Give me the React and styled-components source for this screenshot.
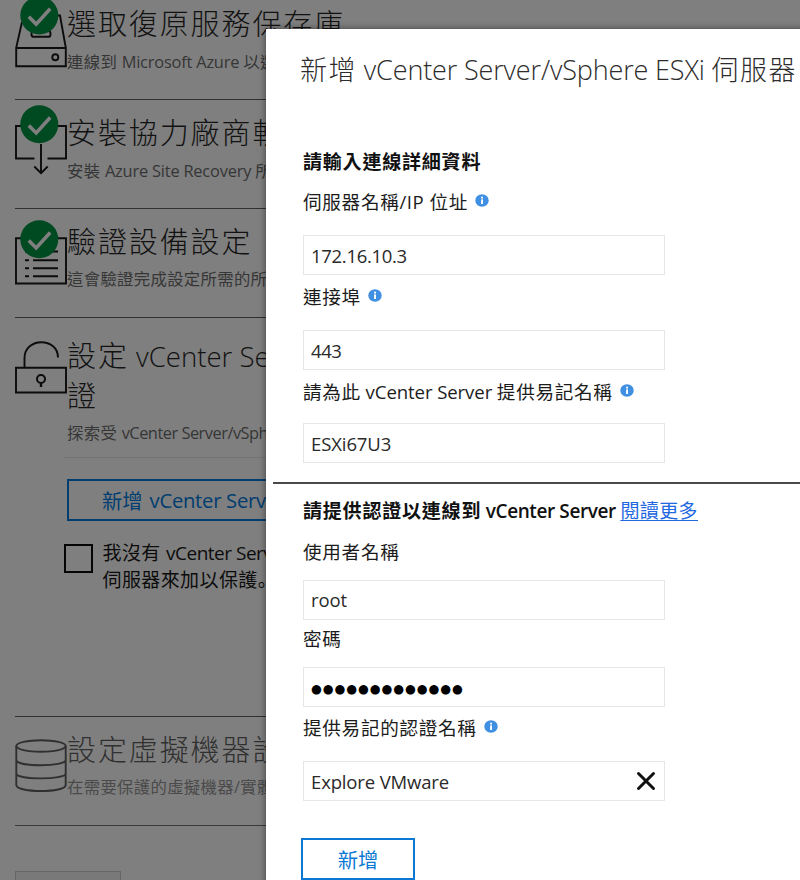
import React from "react";
import styled, { createGlobalStyle } from "styled-components";

const Global = createGlobalStyle`
  * { box-sizing: border-box; }
  body { margin: 0; background: #7f7f7f; }
`;

const Page = styled.div`
  position: relative;
  width: 800px;
  height: 880px;
  overflow: hidden;
  background: #7f7f7f;
  font-family: "Open Sans", "Noto Sans CJK TC", sans-serif;
  color: #111;
  white-space: nowrap;
`;

const Steps = styled.main`
  display: flex;
  flex-direction: column;
  width: 285px;
  margin-top: -9px;
  padding-left: 15px;
`;

const Step = styled.section`
  display: flex;
  height: ${(p) => p.$height || 109}px;
  padding-top: ${(p) => p.$top || 13}px;
  border-bottom: 1.6px solid ${(p) => (p.$muted ? "#3a3a3a" : "#303030")};
`;

const StepIcon = styled.svg`
  flex: none;
  width: 52px;
  height: 84px;
  margin-top: -${(p) => p.$top || 13}px;
  overflow: visible;
  fill: none;
  stroke: ${(p) => (p.$muted ? "#303030" : "#0c0c0c")};
  stroke-width: 1.9;
`;

const StepBody = styled.div`
  flex: 1;
  min-width: 0;
  margin-left: -3px;
  padding-left: 3px;
  overflow: ${(p) => (p.$open ? "visible" : "hidden")};
`;

const StepTitle = styled.h2`
  margin: 0;
  font-size: 29px;
  line-height: 40px;
  font-weight: 300;
  letter-spacing: 1.9px;
  color: ${(p) => (p.$muted ? "#303030" : "#121212")};
`;

const StepNote = styled.p`
  margin: 0;
  font-size: 16.4px;
  line-height: ${(p) => p.$line || 34}px;
  letter-spacing: 0.3px;
  color: ${(p) => (p.$muted ? "#4a4a4a" : "#363636")};
`;

const Latin = styled.span`
  font-size: ${(p) => (p.$size ? p.$size + "px" : "inherit")};
  letter-spacing: ${(p) => p.$track || 0}px;
  font-weight: ${(p) => p.$weight || "inherit"};
`;

const FullStop = styled.span`
  font-family: "Noto Sans CJK JP", sans-serif;
  line-height: 1;
`;

const ThinRule = styled.div`
  height: 1px;
  margin: 7px 0 21px -3px;
  background: #747474;
`;

const OutlineButton = styled.button`
  display: flex;
  align-items: center;
  gap: 7px;
  justify-content: ${(p) => (p.$dim ? "flex-start" : "center")};
  width: ${(p) => p.$width}px;
  height: 42px;
  padding: 0 0 0 ${(p) => (p.$dim ? 33 : 0)}px;
  background: transparent;
  border: 2.4px solid ${(p) => (p.$dim ? "#003d70" : "#0b78d4")};
  color: ${(p) => (p.$dim ? "#003d70" : "#0b78d4")};
  font-family: inherit;
  font-size: 20.3px;
`;

const CheckRow = styled.label`
  display: flex;
  gap: 9.5px;
  margin: 19px 0 0 -3px;
  font-size: 19px;
  line-height: 27px;
  letter-spacing: 0.4px;
  color: #0c0c0c;
`;

const CheckBox = styled.span`
  flex: none;
  width: 29px;
  height: 29px;
  margin-top: 4px;
  border: 2.4px solid #050505;
`;

const FooterButton = styled.div`
  width: 106px;
  height: 40px;
  margin-top: 45px;
  border: 1px solid #666;
  background: #797979;
`;

const Panel = styled.aside`
  position: absolute;
  left: 266px;
  top: 29px;
  width: 560px;
  height: 880px;
  padding-left: 37px;
  background: #fff;
  box-shadow: 0 0 7px rgba(0, 0, 0, 0.5);
`;

const PanelTitle = styled.h1`
  margin: 0 0 30px -3px;
  font-size: 27px;
  font-weight: 300;
  line-height: 82px;
  letter-spacing: 1.5px;
  color: #2c2c2c;
`;

const PanelHeading = styled.h3`
  margin: 0;
  font-size: 19px;
  line-height: ${(p) => p.$line}px;
  font-weight: 700;
  letter-spacing: 0.8px;
  color: #111;
`;

const FieldLabel = styled.div`
  display: flex;
  align-items: center;
  gap: 7px;
  height: ${(p) => p.$line}px;
  margin-bottom: ${(p) => p.$gap}px;
  font-size: 18.6px;
  letter-spacing: 0.7px;
  color: #1c1c1c;
`;

const Field = styled.div`
  display: flex;
  align-items: center;
  justify-content: space-between;
  width: 362px;
  height: 40px;
  padding: ${(p) => p.$drop || 0}px 8px 0 7px;
  border: 1.5px solid #e6e6e6;
  font-size: 18.5px;
  color: #2a2a2a;
`;

const Dots = styled.span`
  font-family: "DejaVu Sans", sans-serif;
  font-size: 12.4px;
  letter-spacing: 0.93px;
  margin-top: 3px;
  color: #000;
`;

const PanelRule = styled.div`
  height: 1.5px;
  margin: 19px 0 1px -30px;
  background: #4a4a4a;
`;

const MoreLink = styled.a`
  font-weight: 400;
  letter-spacing: 0.4px;
  color: #2268e0;
  text-decoration: underline;
  text-underline-offset: 2px;
`;

const ButtonSlot = styled.div`
  margin: 37px 0 0 -2px;
`;

const InfoSvg = styled.svg`
  flex: none;
  width: 14px;
  height: 13px;
`;

const CloseSvg = styled.svg`
  width: 20px;
  height: 20px;
  margin-top: -2px;
  stroke: #111;
  stroke-width: 3;
  stroke-linecap: round;
`;

const Info = () => (
  <InfoSvg viewBox="0 0 14 13">
    <ellipse cx="7" cy="6.5" rx="6.7" ry="6.2" fill="#3f8fe3" />
    <rect x="6.1" y="2.7" width="1.9" height="1.8" fill="#fff" />
    <rect x="6.1" y="5.4" width="1.9" height="4.6" fill="#fff" />
  </InfoSvg>
);

const Done = ({ cy }) => (
  <g>
    <circle cx="24.3" cy={cy} r="19" fill="#004a22" stroke="none" />
    <path
      d={`M13.8 ${cy + 1.2}l7.4 7.4 14-15.4`}
      stroke="#7f7f7f"
      strokeWidth="3.6"
    />
  </g>
);

export default function App() {
  return (
    <Page>
      <Global />
      <Steps>
        <Step>
          <StepIcon>
            <path d="M7 31L1.2 56.8V75.3H50.8V56.8L45 24.5H40M1.2 57H50.8" />
            <rect x="16.5" y="40" width="19" height="5.8" rx="2.4" />
            <circle cx="40.3" cy="66.2" r="3" />
            <Done cy={24.5} />
          </StepIcon>
          <StepBody $open>
            <StepTitle>選取復原服務保存庫</StepTitle>
            <StepNote $line={36}>
              連線到 <Latin $track={-0.2}>Microsoft Azure </Latin>以選
            </StepNote>
          </StepBody>
        </Step>
        <Step>
          <StepIcon>
            <path d="M6 26H1V58.5H19.5M42 26H51V58.5H32.5M26 44V73M19.3 66.5L26 73.2L32.7 66.5" />
            <Done cy={24.3} />
          </StepIcon>
          <StepBody>
            <StepTitle>安裝協力廠商軟</StepTitle>
            <StepNote $line={36}>
              安裝 <Latin $track={-0.2}>Azure Site Recovery </Latin>所
            </StepNote>
          </StepBody>
        </Step>
        <Step>
          <StepIcon>
            <path d="M6 29.3H1V74.5H51V29.3H42M10 42.5H14M10 51.3H14M10 59.3H14M10 67.3H14M18 42.5H43M18 51.3H43M18 59.3H43M18 67.3H43" />
            <Done cy={30.3} />
          </StepIcon>
          <StepBody>
            <StepTitle>驗證設備設定</StepTitle>
            <StepNote>這會驗證完成設定所需的所</StepNote>
          </StepBody>
        </Step>
        <Step $height={399} $top={18}>
          <StepIcon $top={18}>
            <path d="M1 49.7H51V74.5H1ZM9.5 49V40C9.5 19 43 19 43 39.5" />
            <circle cx="26" cy="61" r="4" strokeWidth="2" />
            <path d="M26 65V69" strokeWidth="2.4" />
          </StepIcon>
          <StepBody>
            <StepTitle>
              設定<Latin $track={0} $size={27.6}> vCenter Server</Latin>
              <br />證
            </StepTitle>
            <StepNote>
              探索受 <Latin $track={-0.5}>vCenter Server/vSphere</Latin>
            </StepNote>
            <ThinRule />
            <OutlineButton $dim $width={300}>
              <span>新增</span>
              <Latin $track={-0.3}>vCenter Server</Latin>
            </OutlineButton>
            <CheckRow>
              <CheckBox />
              <span>
                我沒有 <Latin $track={-0.5}>vCenter Server</Latin>
                <br />
                伺服器來加以保護<FullStop>。</FullStop>
              </span>
            </CheckRow>
          </StepBody>
        </Step>
        <Step $muted>
          <StepIcon $muted>
            <ellipse cx="26" cy="29" rx="24.7" ry="5.8" />
            <path d="M1.3 29V68C1.3 76 50.7 76 50.7 68V29M1.3 43C1.3 50 50.7 50 50.7 43M1.3 56.5C1.3 63 50.7 63 50.7 56.5" />
          </StepIcon>
          <StepBody>
            <StepTitle $muted>設定虛擬機器設</StepTitle>
            <StepNote $muted>在需要保護的虛擬機器/實體</StepNote>
          </StepBody>
        </Step>
        <FooterButton />
      </Steps>

      <Panel>
        <PanelTitle>
          新增<Latin $track={-0.15}> vCenter Server/vSphere ESXi </Latin>伺服器
        </PanelTitle>
        <PanelHeading $line={42}>請輸入連線詳細資料</PanelHeading>
        <FieldLabel $line={35} $gap={17}>
          <span>
            伺服器名稱<Latin $track={0.5}>/IP </Latin>位址
          </span>
          <Info />
        </FieldLabel>
        <Field>
          <Latin $track={-0.3}>172.16.10.3</Latin>
        </Field>
        <FieldLabel $line={40} $gap={15}>
          連接埠
          <Info />
        </FieldLabel>
        <Field>
          <Latin $track={-0.4}>443</Latin>
        </Field>
        <FieldLabel $line={40} $gap={13}>
          <span>
            請為此<Latin $track={-0.1}> vCenter Server </Latin>提供易記名稱
          </span>
          <Info />
        </FieldLabel>
        <Field>
          <Latin $track={-0.1}>ESXi67U3</Latin>
        </Field>
        <PanelRule />
        <PanelHeading $line={53}>
          請提供認證以連線到
          <Latin $track={-0.4} $weight={600}> vCenter Server </Latin>
          <MoreLink>閱讀更多</MoreLink>
        </PanelHeading>
        <FieldLabel $line={26} $gap={16}>使用者名稱</FieldLabel>
        <Field>
          <Latin $track={-0.1}>root</Latin>
        </Field>
        <FieldLabel $line={36} $gap={11}>密碼</FieldLabel>
        <Field>
          <Dots>●●●●●●●●●●●●●</Dots>
        </Field>
        <FieldLabel $line={39} $gap={15}>
          提供易記的認證名稱
          <Info />
        </FieldLabel>
        <Field $drop={2}>
          <Latin $track={-0.15}>Explore VMware</Latin>
          <CloseSvg viewBox="0 0 20 20">
            <path d="M2.5 2.5L17.5 17.5M17.5 2.5L2.5 17.5" />
          </CloseSvg>
        </Field>
        <ButtonSlot>
          <OutlineButton $width={114}>新增</OutlineButton>
        </ButtonSlot>
      </Panel>
    </Page>
  );
}
